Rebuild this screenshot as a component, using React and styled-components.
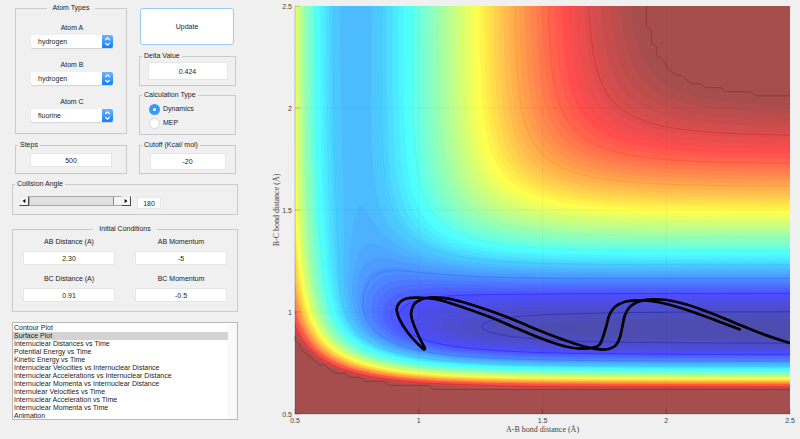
import React, { useState } from 'react';
import styled, { createGlobalStyle } from 'styled-components';

const GlobalStyle = createGlobalStyle`
  * {
    box-sizing: border-box;
  }

  body {
    margin: 0;
    background: #f0f0f0;
    color: #1c1c1c;
    font-family: "Liberation Sans", Arial, sans-serif;
    font-size: 7px;
    line-height: 8px;
  }

  button, input, select {
    font: inherit;
    color: inherit;
  }
`;

const Page = styled.main`
  display: grid;
  grid-template-columns: 33fr 67fr;
  align-items: start;
`;

const Sidebar = styled.form`
  display: flex;
  flex-direction: column;
  gap: 10px;
  padding: 4px 26px 0 12px;
`;

const TopPanels = styled.div`
  display: grid;
  grid-template-columns: 115fr 111fr;
  row-gap: 6px;
`;

const Column = styled.div`
  display: flex;
  flex-direction: column;
  gap: 5px;
  padding: ${(props) => (props.$right ? '0 2px 0 12px' : '0 0 0 3px')};
`;

const WidePanel = styled.div`
  grid-column: 1 / -1;
`;

const Group = styled.fieldset`
  margin: 0;
  min-width: 0;
  padding: 0 2px;
  border: 1px solid #cbcbcb;
  height: ${(props) => props.$height};
`;

const Title = styled.legend`
  padding: ${(props) => (props.$center ? '0 6px' : '0 2px')};
  margin: ${(props) => (props.$center ? '0 auto' : '0')};
  line-height: 8px;
`;

const UpdateButton = styled.button`
  height: 37px;
  margin: 4px 2px 2px 1px;
  background: #fff;
  border: 1px solid #9cc8f3;
  border-radius: 3px;
`;

const AtomFields = styled.div`
  display: flex;
  flex-direction: column;
  gap: 13px;
  padding: 12px 0 0 2px;
`;

const AtomField = styled.label`
  display: flex;
  flex-direction: column;
  align-items: center;
  gap: 3px;
`;

const SelectBox = styled.span`
  position: relative;
  display: block;
  width: 82px;
  height: 13px;
`;

const AtomSelect = styled.select`
  appearance: none;
  display: block;
  width: 100%;
  height: 100%;
  padding: 0 14px 0 7px;
  background: #fff;
  border: 0;
  border-radius: 2px;
  box-shadow: 0 1px 1px rgba(0, 0, 0, 0.12);
`;

const Stepper = styled.svg`
  position: absolute;
  top: 0;
  right: 0;
  width: 11px;
  height: 13px;
  pointer-events: none;
`;

const Field = styled.input`
  display: block;
  width: ${(props) => props.$width || '100%'};
  height: ${(props) => props.$height || '14px'};
  margin: 0;
  padding: 0;
  background: #fff;
  border: 1px solid #e6e6e6;
  text-align: center;
`;

const FieldWrap = styled.div`
  display: flex;
  justify-content: center;
  padding-top: ${(props) => props.$top};
`;

const RadioList = styled.div`
  padding: 3px 0 0 7px;
`;

const RadioRow = styled.label`
  display: flex;
  align-items: center;
  gap: 3px;
  height: 14px;
`;

const Radio = styled.input`
  appearance: none;
  width: 11px;
  height: 11px;
  margin: 0;
  background: #fff;
  border: 1px solid #d6d6d6;
  border-radius: 50%;

  &:checked {
    border: 4px solid #3a97fb;
  }
`;

const AngleRow = styled.div`
  display: flex;
  align-items: flex-start;
  padding: 8px 0 0 4px;
`;

const ArrowButton = styled.button`
  display: flex;
  align-items: center;
  justify-content: center;
  width: 10px;
  height: 10px;
  padding: 0;
  background: #f6f6f6;
  border: 1px solid;
  border-color: #e8e8e8 #4c4c4c #4c4c4c #e8e8e8;
`;

const AngleSlider = styled.input`
  appearance: none;
  width: 92px;
  height: 10px;
  margin: 0;
  background: #e1e1e1;
  border: 1px solid #a9a9a9;
  border-right: 0;

  &::-webkit-slider-thumb {
    appearance: none;
    width: 8px;
    height: 8px;
    background: #f6f6f6;
    border-left: 1px solid #8a8a8a;
  }
`;

const AngleField = styled(Field)`
  margin: 1px 0 0 6px;
`;

const ConditionGrid = styled.div`
  display: grid;
  grid-template-columns: 1fr 1fr;
  column-gap: 20px;
  row-gap: 10px;
  padding: 5px 8px 0;
`;

const ConditionField = styled.label`
  display: flex;
  flex-direction: column;
  gap: 5px;
  text-align: center;
`;

const PlotList = styled.select`
  width: 100%;
  height: 98px;
  padding: 1px 9px 0 0;
  border: 1px solid #b9b9b9;
  border-radius: 0;
  background: linear-gradient(to left, #f9f9f9 10px, #fff 10px);
  overflow: hidden;
  outline: none;

  option {
    min-height: 0;
    height: 8px;
    padding: 0 1px;
    line-height: 8px;
    font-size: 7px;
  }

  option:checked {
    color: #1c1c1c;
    background: linear-gradient(#d3d3d3, #d3d3d3);
  }
`;

const Chart = styled.svg`
  display: block;
  width: 100%;
  height: auto;
`;

const TickText = styled.text`
  font: 7px "Liberation Sans", Arial, sans-serif;
  fill: #444;
`;

const AxisText = styled.text`
  font: 8px "Liberation Serif", "Times New Roman", serif;
  fill: #444;
`;

// LEPS surface, distances in angstrom and energies in kcal/mol
const HH = { D: 109.5, beta: 1.942, r0: 0.7414 };
const HF = { D: 141.2, beta: 2.2187, r0: 0.917 };
const SATO = 0.18;
const CEILING = -22.5;
const STEP = 0.02;
const N = 101;

const PLOT = { left: 31, top: 6, width: 495, height: 408 };

function integrals(p, r) {
  const e = Math.exp(-p.beta * (r - p.r0));
  const f = p.D / (4 * (1 + SATO));
  return {
    q: f * ((3 + SATO) * e * e - (2 + 6 * SATO) * e),
    j: f * ((1 + 3 * SATO) * e * e - (6 + 2 * SATO) * e),
  };
}

function energy(ab, bc) {
  const a = integrals(HH, ab);
  const b = integrals(HF, bc);
  const c = integrals(HF, ab + bc);
  const ex = ((a.j - b.j) ** 2 + (b.j - c.j) ** 2 + (c.j - a.j) ** 2) / 2;
  return a.q + b.q + c.q - Math.sqrt(ex);
}

function makeGrid() {
  const rows = [];
  for (let i = 0; i < N; i++) {
    const row = [];
    for (let j = 0; j < N; j++) {
      row.push(Math.min(CEILING, energy(0.5 + j * STEP, 0.5 + i * STEP)));
    }
    rows.push(row);
  }
  return rows;
}

const px = (j) => (PLOT.left + (j * PLOT.width) / (N - 1)).toFixed(2);
const py = (i) => (PLOT.top + PLOT.height - (i * PLOT.height) / (N - 1)).toFixed(2);

function corners(grid, i, j) {
  return [
    [j, i, grid[i][j]],
    [j + 1, i, grid[i][j + 1]],
    [j + 1, i + 1, grid[i + 1][j + 1]],
    [j, i + 1, grid[i + 1][j]],
  ];
}

function crossing(a, b, level) {
  const t = (level - a[2]) / (b[2] - a[2]);
  return `${px(a[0] + t * (b[0] - a[0]))} ${py(a[1] + t * (b[1] - a[1]))}`;
}

// Area where the surface is at or above the level
function fillPath(grid, level) {
  let d = '';
  for (let i = 0; i < N - 1; i++) {
    let runStart = -1;
    for (let j = 0; j < N; j++) {
      const cell = j < N - 1 ? corners(grid, i, j) : [];
      const inside = cell.filter((c) => c[2] >= level).length;
      if (inside === 4) {
        if (runStart < 0) runStart = j;
        continue;
      }
      if (runStart >= 0) {
        d += `M${px(runStart)} ${py(i)}H${px(j)}V${py(i + 1)}H${px(runStart)}Z`;
        runStart = -1;
      }
      if (inside === 0) continue;
      const points = [];
      cell.forEach((a, n) => {
        const b = cell[(n + 1) % 4];
        if (a[2] >= level) points.push(`${px(a[0])} ${py(a[1])}`);
        if (a[2] >= level !== b[2] >= level) points.push(crossing(a, b, level));
      });
      d += `M${points.join('L')}Z`;
    }
  }
  return d;
}

function linePath(grid, level) {
  let d = '';
  for (let i = 0; i < N - 1; i++) {
    for (let j = 0; j < N - 1; j++) {
      const cell = corners(grid, i, j);
      const points = [];
      cell.forEach((a, n) => {
        const b = cell[(n + 1) % 4];
        if (a[2] >= level !== b[2] >= level) points.push(crossing(a, b, level));
      });
      if (points.length >= 2) d += `M${points[0]}L${points[1]}`;
    }
  }
  return d;
}

const clamp = (v) => Math.max(0, Math.min(1, v));

function jet(t, alpha) {
  const rgb = [3, 2, 1].map((c) => clamp(1.5 - Math.abs(4 * t - c)));
  return `rgb(${rgb.map((v) => Math.round(255 * (alpha * v + 1 - alpha))).join(',')})`;
}

const GRID = makeGrid();
const MIN = Math.min(...GRID.flat());
const COLORS = 64;
const BANDS = Array.from({ length: COLORS }, (_, n) => ({
  color: jet((n + 1) / COLORS, 0.7),
  d: fillPath(GRID, MIN + ((CEILING - MIN) * n) / COLORS),
}));
const LEVELS = [-137, -126.5, -116, -105.5, -95, -84.5, -74, -63.5, -53.5, -43, -32.5, CEILING];
const LINES = LEVELS.map((level) => ({
  color: jet((level - MIN) / (CEILING - MIN), 1),
  d: linePath(GRID, level),
}));

// Path of the collision, in drawing units
const TRAJECTORY = [
  [476.7, 329.7], [452.7, 320.7], [426, 311], [402.7, 304], [386, 301], [372.7, 300.3],
  [361, 301.7], [351, 306.7], [345.3, 315], [341.7, 328.3], [336, 344], [328, 348],
  [316, 348.6], [302.7, 346.7], [286, 341.7], [266, 334], [246, 325.4], [226, 317],
  [194.3, 305.7], [174.3, 299.7], [161, 298], [151, 297.7], [141, 299], [135, 303.3],
  [132.7, 310], [136, 320], [144.3, 333.3], [154.3, 344.3], [159.3, 349], [160.9, 348.3],
  [158.3, 343.3], [152.7, 331.7], [147.9, 319], [147.3, 311.7], [151, 303.3], [161, 298.3],
  [171, 297.3], [184.3, 298.7], [204.3, 303.7], [224.3, 310.2], [246, 318.2], [266, 326.7],
  [286, 334.7], [306, 342], [319.3, 346.3], [330, 348.6], [341, 349.5], [351, 346],
  [355.6, 338.3], [358.3, 326.7], [361, 315], [366, 306.7], [374.3, 301.7], [386, 299.4],
  [402.7, 300], [422.7, 304.5], [446, 312.7], [469.3, 322.3], [496, 333], [526, 343.3],
];

// Catmull-Rom spline written as cubic beziers
function smooth(points) {
  let d = `M${points[0].join(' ')}`;
  for (let n = 0; n < points.length - 1; n++) {
    const p0 = points[n - 1] || points[n];
    const p1 = points[n];
    const p2 = points[n + 1];
    const p3 = points[n + 2] || p2;
    const c1 = [0, 1].map((a) => p1[a] + (p2[a] - p0[a]) / 6);
    const c2 = [0, 1].map((a) => p2[a] - (p3[a] - p1[a]) / 6);
    d += `C${c1.join(' ')} ${c2.join(' ')} ${p2.join(' ')}`;
  }
  return d;
}

const TICKS = [0.5, 1, 1.5, 2, 2.5];
const ATOMS = ['hydrogen', 'fluorine', 'chlorine', 'oxygen'];
const PLOTS = [
  'Contour Plot',
  'Surface Plot',
  'Internuclear Distances vs Time',
  'Potential Energy vs Time',
  'Kinetic Energy vs Time',
  'Internuclear Velocities vs Internuclear Distance',
  'Internuclear Accelerations vs Internuclear Distance',
  'Internuclear Momenta vs Internuclear Distance',
  'Internulear Velocities vs Time',
  'Internuclear Acceleration vs Time',
  'Internuclear Momenta vs Time',
  'Animation',
];
const CONDITIONS = [
  ['AB Distance (A)', '2.30'],
  ['AB Momentum', '-5'],
  ['BC Distance (A)', '0.91'],
  ['BC Momentum', '-0.5'],
];

function AtomPicker({ label, value }) {
  return (
    <AtomField>
      {label}
      <SelectBox>
        <AtomSelect defaultValue={value}>
          {ATOMS.map((atom) => (
            <option key={atom}>{atom}</option>
          ))}
        </AtomSelect>
        <Stepper viewBox="0 0 11 13" aria-hidden="true">
          <defs>
            <linearGradient id="stepper" x2="0" y2="1">
              <stop offset="0" stopColor="#6db5fc" />
              <stop offset="1" stopColor="#137ffb" />
            </linearGradient>
          </defs>
          <path d="M0 0H9Q11 0 11 2V11Q11 13 9 13H0Z" fill="url(#stepper)" />
          <path d="M3.3 5L5.5 2.9L7.7 5M3.3 8L5.5 10.1L7.7 8" fill="none" stroke="#fff" strokeWidth="1.2" />
        </Stepper>
      </SelectBox>
    </AtomField>
  );
}

function SurfaceChart() {
  const { left, top, width, height } = PLOT;
  const bottom = top + height;
  const xAt = (v) => left + ((v - 0.5) * width) / 2;
  const yAt = (v) => bottom - ((v - 0.5) * height) / 2;

  return (
    <Chart viewBox="0 0 536 439" role="img" aria-label="Potential energy surface">
      <clipPath id="plot">
        <rect x={left} y={top} width={width} height={height} />
      </clipPath>
      {BANDS.map((band) => (
        <path key={band.color} d={band.d} fill={band.color} />
      ))}
      <g fill="none" strokeWidth="0.7" strokeOpacity="0.45">
        {LINES.map((line) => (
          <path key={line.color} d={line.d} stroke={line.color} />
        ))}
      </g>
      <g stroke="#000" strokeOpacity="0.04">
        {TICKS.slice(1, 4).map((t) => (
          <path key={t} d={`M${xAt(t)} ${top}V${bottom}M${left} ${yAt(t)}H${left + width}`} />
        ))}
      </g>
      <g stroke="#000" strokeOpacity="0.2">
        {TICKS.map((t) => (
          <path key={t} d={`M${xAt(t)} ${bottom}v-5M${left} ${yAt(t)}h5`} />
        ))}
        <path d={`M${left} ${top}V${bottom}H${left + width}`} fill="none" />
      </g>
      <path
        d={smooth(TRAJECTORY)}
        clipPath="url(#plot)"
        fill="none"
        stroke="#000"
        strokeWidth="2.7"
        strokeLinejoin="round"
      />
      {TICKS.map((t) => (
        <TickText key={`x${t}`} x={xAt(t)} y={bottom + 9} textAnchor="middle">{t}</TickText>
      ))}
      {TICKS.map((t) => (
        <TickText key={`y${t}`} x={left - 3} y={yAt(t) + 3} textAnchor="end">{t}</TickText>
      ))}
      <AxisText x={left + width / 2} y="432" textAnchor="middle">A-B bond distance (Å)</AxisText>
      <AxisText transform="translate(15 210) rotate(-90)" textAnchor="middle">
        B-C bond distance (Å)
      </AxisText>
    </Chart>
  );
}

function App() {
  const [angle, setAngle] = useState(180);
  const [calc, setCalc] = useState('Dynamics');

  const changeAngle = (value) => {
    setAngle(Math.max(0, Math.min(180, Number(value) || 0)));
  };

  return (
    <Page>
      <GlobalStyle />
      <Sidebar onSubmit={(e) => e.preventDefault()}>
        <TopPanels>
          <Column>
            <Group $height="130px">
              <Title $center>Atom Types</Title>
              <AtomFields>
                <AtomPicker label="Atom A" value="hydrogen" />
                <AtomPicker label="Atom B" value="hydrogen" />
                <AtomPicker label="Atom C" value="fluorine" />
              </AtomFields>
            </Group>
          </Column>
          <Column $right>
            <UpdateButton type="submit">Update</UpdateButton>
            <Group $height="34px">
              <Title>Delta Value</Title>
              <FieldWrap $top="2px">
                <Field aria-label="Delta Value" defaultValue="0.424" $width="80px" $height="18px" />
              </FieldWrap>
            </Group>
            <Group $height="44px">
              <Title>Calculation Type</Title>
              <RadioList>
                {['Dynamics', 'MEP'].map((name) => (
                  <RadioRow key={name}>
                    <Radio
                      type="radio"
                      name="calc"
                      checked={calc === name}
                      onChange={() => setCalc(name)}
                    />
                    {name}
                  </RadioRow>
                ))}
              </RadioList>
            </Group>
          </Column>
          <Column>
            <Group $height="33px">
              <Title>Steps</Title>
              <FieldWrap $top="4px">
                <Field aria-label="Steps" defaultValue="500" $width="82px" />
              </FieldWrap>
            </Group>
          </Column>
          <Column $right>
            <Group $height="33px">
              <Title>Cutoff (Kcal/ mol)</Title>
              <FieldWrap $top="4px">
                <Field aria-label="Cutoff" defaultValue="-20" $width="76px" $height="17px" />
              </FieldWrap>
            </Group>
          </Column>
          <WidePanel>
            <Group $height="35px">
              <Title>Collision Angle</Title>
              <AngleRow>
                <ArrowButton type="button" aria-label="Decrease angle" onClick={() => changeAngle(angle - 1)}>
                  <svg width="4" height="4" viewBox="0 0 4 4"><path d="M3.4 0V4L0.6 2Z" /></svg>
                </ArrowButton>
                <AngleSlider
                  type="range"
                  aria-label="Collision Angle"
                  min="0"
                  max="180"
                  value={angle}
                  onChange={(e) => changeAngle(e.target.value)}
                />
                <ArrowButton type="button" aria-label="Increase angle" onClick={() => changeAngle(angle + 1)}>
                  <svg width="4" height="4" viewBox="0 0 4 4"><path d="M0.6 0V4L3.4 2Z" /></svg>
                </ArrowButton>
                <AngleField
                  aria-label="Angle in degrees"
                  value={angle}
                  onChange={(e) => changeAngle(e.target.value)}
                  $width="24px"
                  $height="12px"
                />
              </AngleRow>
            </Group>
          </WidePanel>
        </TopPanels>

        <Group $height="87px">
          <Title $center>Initial Conditions</Title>
          <ConditionGrid>
            {CONDITIONS.map(([label, value]) => (
              <ConditionField key={label}>
                {label}
                <Field defaultValue={value} />
              </ConditionField>
            ))}
          </ConditionGrid>
        </Group>

        <PlotList size="12" aria-label="Plot type" defaultValue="Surface Plot">
          {PLOTS.map((plot) => (
            <option key={plot}>{plot}</option>
          ))}
        </PlotList>
      </Sidebar>
      <SurfaceChart />
    </Page>
  );
}

export default App;
